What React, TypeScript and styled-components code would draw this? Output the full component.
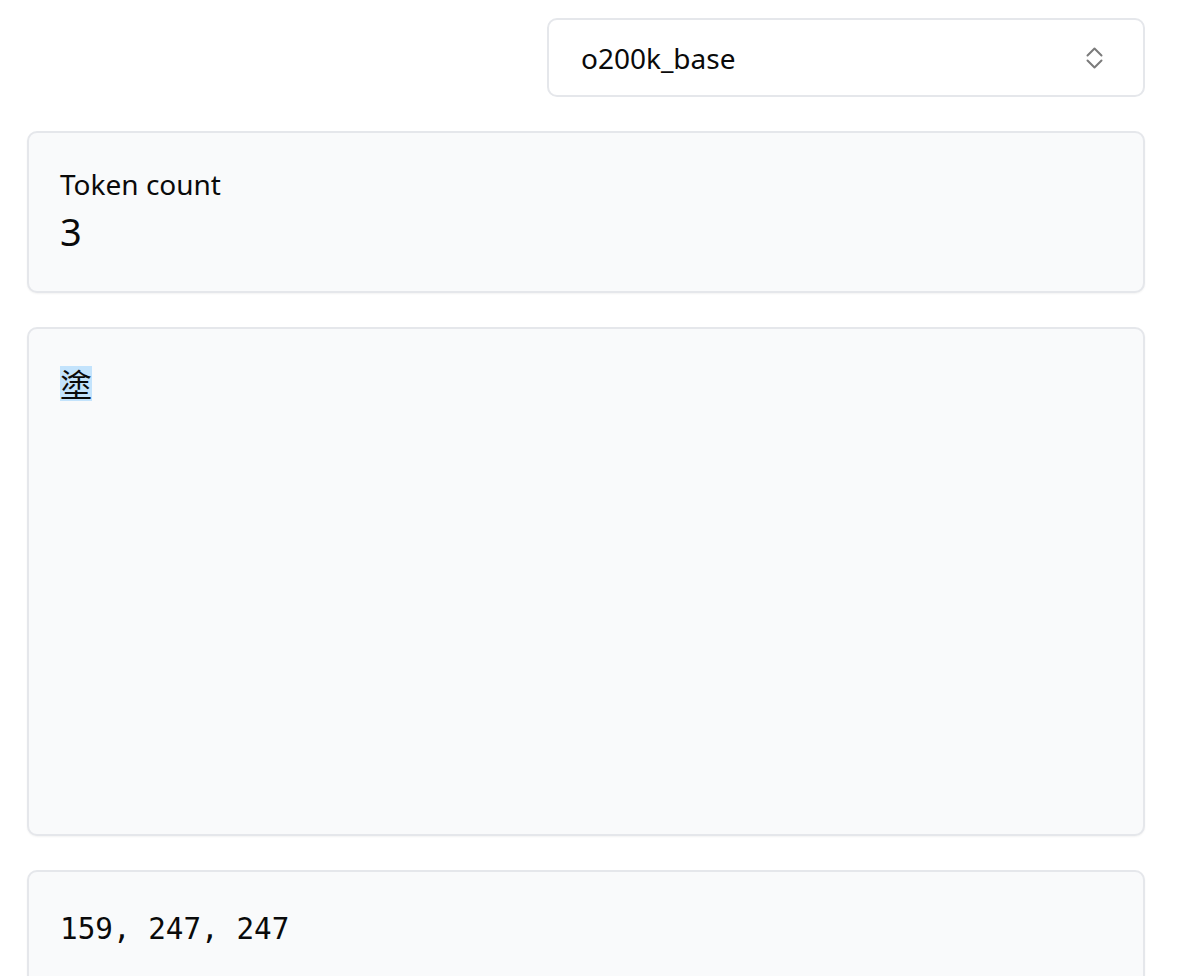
import React from "react";
import styled, { createGlobalStyle } from "styled-components";

const Global = createGlobalStyle`
  html, body { margin: 0; padding: 0; background: #ffffff; }
  body { font-family: "Noto Sans", "Open Sans", sans-serif; color: #0a0a0a; }
`;

const Page = styled.div`
  width: 1118px;
  padding: 18px 0 0 27px;
  display: flex;
  flex-direction: column;
  gap: 34px;
`;

const TopRow = styled.div`
  display: flex;
  justify-content: flex-end;
`;

const Select = styled.div`
  box-sizing: border-box;
  width: 598px;
  height: 79px;
  border: 2px solid #e5e7eb;
  border-radius: 10px;
  background: #ffffff;
  display: flex;
  align-items: center;
  justify-content: space-between;
  padding: 0 40px 0 32px;
  font-size: 28px;
`;

const Card = styled.div<{ $h: number }>`
  box-sizing: border-box;
  height: ${(p) => p.$h}px;
  border: 2px solid #e5e7eb;
  border-radius: 10px;
  background: #f9fafb;
  box-shadow: 0 1px 2px rgba(0, 0, 0, 0.05);
  padding: 31px 31px;
  display: flex;
  flex-direction: column;
`;

const Label = styled.div`
  font-size: 28px;
  line-height: 40px;
`;

const Count = styled.div`
  font-size: 38px;
  line-height: 54px;
`;

const TokenText = styled.div`
  font-family: "Noto Sans CJK TC", "Noto Sans CJK SC", sans-serif;
  font-size: 32px;
`;

const Tok = styled.span<{ $bg: string }>`
  display: inline-block;
  background: ${(p) => p.$bg};
  line-height: 35px;
  height: 35px;
`;

const Ids = styled.div`
  font-family: "DejaVu Sans Mono", monospace;
  font-size: 29.3px;
  padding-top: 9px;
`;

const Chevrons = () => (
  <svg width="17" height="22" viewBox="0 0 17 22" fill="none" stroke="#7b7b7b" strokeWidth="2" strokeLinecap="round" strokeLinejoin="round">
    <polyline points="1.5,8.5 8.5,1.5 15.5,8.5" />
    <polyline points="1.5,13.5 8.5,20.5 15.5,13.5" />
  </svg>
);

export default function App() {
  return (
    <>
      <Global />
      <Page>
        <TopRow>
          <Select>
            <span>o200k_base</span>
            <Chevrons />
          </Select>
        </TopRow>
        <Card $h={162}>
          <Label>Token count</Label>
          <Count>3</Count>
        </Card>
        <Card $h={509}>
          <TokenText>
            <Tok $bg="#c3e3fc">塗</Tok>
          </TokenText>
        </Card>
        <Card $h={140}>
          <Ids>159, 247, 247</Ids>
        </Card>
      </Page>
    </>
  );
}
